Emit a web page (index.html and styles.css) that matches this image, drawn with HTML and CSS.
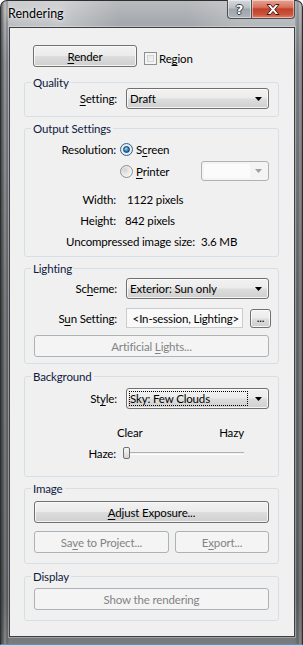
FILE: index.html
```html
<!DOCTYPE html>
<html>
<head>
<meta charset="utf-8">
<link rel="stylesheet" href="styles.css">
</head>
<body>
<div class="window">
  <div class="titlebar">
    <span class="title">Rendering</span>
    <div class="caption-buttons">
      <div class="cap-btn help"><span class="help-glyph">?</span></div>
      <div class="cap-btn close">
        <svg width="14" height="11" viewBox="0 0 14 11"><path d="M1 0.5h3.5l2.5 3 2.5-3h3.5l-4.2 5 4.2 5h-3.5l-2.5-3-2.5 3h-3.5l4.2-5z" fill="#fff" stroke="#4a1a12" stroke-width="1" stroke-linejoin="round"/></svg>
      </div>
    </div>
  </div>
  <div class="client">
    <div class="top-row">
      <div class="btn render-btn"><span><u>R</u>ender</span></div>
      <div class="check-wrap"><span class="checkbox"></span><span>Re<u>g</u>ion</span></div>
    </div>

    <fieldset class="group quality">
      <legend>Quality</legend>
      <div class="row first">
        <span class="lbl"><u>S</u>etting:</span>
        <div class="combo"><span class="combo-text">Draft</span><span class="arrow"><svg width="7" height="4" viewBox="0 0 7 4"><path d="M0 0h7l-3.5 4z" fill="#000"/></svg></span></div>
      </div>
    </fieldset>

    <fieldset class="group output">
      <legend>Output Settings</legend>
      <div class="rrow res">
        <span class="lbl">Resolution:</span>
        <div class="radio-wrap"><span class="radio checked"><span class="dot"></span></span><span>S<u>c</u>reen</span></div>
      </div>
      <div class="rrow printer">
        <span class="lbl"></span>
        <div class="radio-wrap"><span class="radio"></span><span><u>P</u>rinter</span></div>
        <div class="combo disabled small"><span class="field"></span><span class="arrow"><svg width="7" height="4" viewBox="0 0 7 4"><path d="M0 0h7l-3.5 4z" fill="#a0a0a0"/></svg></span></div>
      </div>
      <div class="vrow first-v"><span class="lbl">Width:</span><span class="val w">1122 pixels</span></div>
      <div class="vrow"><span class="lbl">Height:</span><span class="val h">842 pixels</span></div>
      <div class="unc"><span>Uncompressed image size:</span><span class="unc-val">3.6 MB</span></div>
    </fieldset>

    <fieldset class="group lighting">
      <legend>Lighting</legend>
      <div class="row scheme">
        <span class="lbl">Sc<u>h</u>eme:</span>
        <div class="combo"><span class="combo-text">Exterior: Sun only</span><span class="arrow"><svg width="7" height="4" viewBox="0 0 7 4"><path d="M0 0h7l-3.5 4z" fill="#000"/></svg></span></div>
      </div>
      <div class="row sun">
        <span class="lbl">S<u>u</u>n Setting:</span>
        <div class="sun-ctrls">
          <div class="textbox"><span>&lt;In-session, Lighting&gt;</span></div>
          <div class="btn dots"><span>...</span></div>
        </div>
      </div>
      <div class="btn wide disabled art"><span>Artificial <u>L</u>ights...</span></div>
    </fieldset>

    <fieldset class="group background">
      <legend>Background</legend>
      <div class="row style">
        <span class="lbl">St<u>y</u>le:</span>
        <div class="combo focus"><span class="focus-rect">Sky: Few Clouds</span><span class="arrow"><svg width="7" height="4" viewBox="0 0 7 4"><path d="M0 0h7l-3.5 4z" fill="#000"/></svg></span></div>
      </div>
      <div class="scale"><span>Clear</span><span>Hazy</span></div>
      <div class="haze-row">
        <span class="lbl">Haze:</span>
        <div class="slider"><span class="track"></span><span class="thumb"></span></div>
      </div>
    </fieldset>

    <fieldset class="group image">
      <legend>Image</legend>
      <div class="btn wide adjust"><span><u>A</u>djust Exposure...</span></div>
      <div class="btn-row">
        <div class="btn disabled save"><span>Sa<u>v</u>e to Project...</span></div>
        <div class="btn disabled export"><span>E<u>x</u>port...</span></div>
      </div>
    </fieldset>

    <fieldset class="group display">
      <legend>Display</legend>
      <div class="btn wide disabled show"><span>Show the rendering</span></div>
    </fieldset>
  </div>
</div>
</body>
</html>
```
FILE: styles.css
```css
html, body {
  margin: 0;
  padding: 0;
}
body {
  width: 303px;
  height: 645px;
  background: #ffffff;
  font-family: Lato, "Liberation Sans", sans-serif;
  font-size: 11.5px;
  letter-spacing: -0.15px;
  color: #000;
  overflow: hidden;
}
u { text-decoration-thickness: 1px; text-underline-offset: 2px; }

.window {
  box-sizing: border-box;
  height: 645px;
  width: 303px;
  display: flex;
  flex-direction: column;
  padding: 0 7px 7px 8px;
  border-radius: 7px 7px 0 0;
  border: 1px solid #2e2e2e;
  border-bottom-color: #2aa7c9;
  background:
    linear-gradient(90deg, rgba(30,30,30,0.6) 0, rgba(30,30,30,0.1) 3px, rgba(255,255,255,0.15) 4px, rgba(30,30,30,0.25) 6px, rgba(30,30,30,0) 8px, rgba(30,30,30,0) 294px, rgba(30,30,30,0.25) 297px, rgba(255,255,255,0.12) 299px, rgba(30,30,30,0.6) 303px),
    linear-gradient(180deg, #b9bcbf 0, #a7abaf 20px, #8a8e93 60px, #6f7377 300px, #63676b 600px, #7a7d80 645px);
}
.titlebar {
  height: 26px;
  display: flex;
  align-items: flex-start;
  flex-shrink: 0;
  margin-left: -1px;
  background: linear-gradient(90deg, rgba(255,255,255,0.25) 0, rgba(255,255,255,0.35) 50px, rgba(255,255,255,0) 110px, rgba(255,255,255,0) 180px, rgba(255,255,255,0.2) 230px);
}
.title {
  padding-top: 5px;
  line-height: 16px;
  font-size: 12.5px;
  letter-spacing: 0;
  color: #000;
  text-shadow: 0 0 8px rgba(255,255,255,0.9), 0 0 3px rgba(255,255,255,0.8);
}
.caption-buttons {
  margin-left: auto;
  margin-top: -1px;
  display: flex;
}
.cap-btn {
  box-sizing: border-box;
  height: 19px;
  display: flex;
  align-items: center;
  justify-content: center;
  border: 1px solid #4b4f54;
  border-top: none;
  box-shadow: inset 0 0 0 1px rgba(255,255,255,0.45);
}
.help {
  width: 25px;
  border-radius: 0 0 0 4px;
  background: linear-gradient(180deg, #d6dade 0, #b9bec3 45%, #9ea4aa 50%, #aeb4ba 100%);
}
.help-glyph {
  font-family: "DejaVu Sans", sans-serif;
  font-weight: bold;
  font-size: 13px;
  line-height: 13px;
  letter-spacing: 0;
  color: #fff;
  text-shadow: 1px 0 0 #3a3f45, -1px 0 0 #3a3f45, 0 1px 0 #3a3f45, 0 -1px 0 #3a3f45;
}
.close {
  width: 43px;
  border-left: none;
  border-radius: 0 0 4px 0;
  background: linear-gradient(180deg, #e6a393 0, #d7735d 40%, #c2402a 50%, #c9533a 80%, #e0836a 100%);
}

.client {
  flex: 1;
  box-sizing: border-box;
  background: #f0f0f0;
  border: 1px solid #3f3f3f;
  box-shadow: 0 0 0 1px rgba(255,255,255,0.3);
  padding: 17px 15px 0 14px;
  display: flex;
  flex-direction: column;
}

/* buttons */
.btn {
  box-sizing: border-box;
  height: 22px;
  border: 1px solid #707070;
  border-radius: 3px;
  background: linear-gradient(180deg, #f2f2f2 0, #ebebeb 48%, #dddddd 52%, #cfcfcf 100%);
  box-shadow: inset 0 0 0 1px rgba(252,252,252,0.8);
  display: flex;
  align-items: center;
  justify-content: center;
  line-height: 15px;
  white-space: nowrap;
}
.btn.disabled {
  border-color: #adb2b5;
  background: #f4f4f4;
  box-shadow: none;
  color: #838383;
}
.top-row {
  display: flex;
  align-items: flex-start;
  padding-left: 9px;
}
.render-btn { width: 104px; }
.check-wrap {
  display: flex;
  align-items: center;
  margin-left: 7px;
  margin-top: 6px;
  line-height: 15px;
}
.checkbox {
  box-sizing: border-box;
  width: 13px;
  height: 13px;
  border: 1px solid #8e8f8f;
  background: linear-gradient(135deg, #dcdcdc 0, #f0f0f0 60%, #fbfbfb 100%);
  box-shadow: inset 0 0 0 2px #f4f4f4, inset 0 0 0 3px #d4d4d4;
  margin-right: 2px;
}

/* group boxes */
.group {
  margin: 0;
  padding: 0 9px 7px 0;
  border: 1px solid #d5dfe5;
  border-radius: 3px;
  min-width: 0;
}
.group legend {
  margin-left: 6px;
  padding: 0 2px;
  line-height: 13px;
  color: #0f1a40;
}
.quality { margin-top: 9px; }
.output { margin-top: 5px; padding-bottom: 4px; }
.lighting { margin-top: 5px; padding-bottom: 6px; }
.background { margin-top: 6px; padding-bottom: 15px; }
.image { margin-top: 5px; padding-bottom: 10px; }
.display { margin-top: 6px; padding-bottom: 10px; }

.row {
  display: grid;
  grid-template-columns: 92px 1fr;
  column-gap: 9px;
  align-items: center;
}
.lbl { text-align: right; line-height: 15px; white-space: nowrap; }
.quality .row.first { margin-top: -1px; }

/* combo */
.combo {
  box-sizing: border-box;
  height: 21px;
  border: 1px solid #707070;
  border-radius: 3px;
  background: linear-gradient(180deg, #f2f2f2 0, #ebebeb 48%, #dddddd 52%, #cfcfcf 100%);
  box-shadow: inset 0 0 0 1px rgba(252,252,252,0.8);
  display: flex;
  align-items: center;
  line-height: 15px;
}
.combo-text {
  flex: 1;
  padding-left: 3px;
  white-space: nowrap;
}
.arrow {
  width: 16px;
  display: flex;
  justify-content: center;
  align-items: center;
  margin-right: 2px;
}
.combo.focus { padding-left: 2px; }
.focus-rect {
  flex: 1;
  height: 15px;
  outline: 1px dotted #000;
  outline-offset: -1px;
  padding-left: 1px;
  margin-right: 2px;
  line-height: 15px;
  white-space: nowrap;
}
.combo.disabled {
  border-color: #adb2b5;
  background: #f4f4f4;
  box-shadow: none;
  padding-left: 2px;
}
.combo.small { width: 68px; height: 20px; margin-left: auto; }
.field {
  flex: 1;
  height: 14px;
  background: #fbfbfb;
}

/* output rows */
.rrow {
  display: flex;
  align-items: center;
  height: 20px;
}
.rrow .lbl { width: 91px; flex-shrink: 0; }
.res { margin-top: 4px; }
.printer { margin-top: 2px; }
.radio-wrap {
  display: flex;
  align-items: center;
  margin-left: 4px;
  line-height: 15px;
}
.radio {
  box-sizing: border-box;
  width: 13px;
  height: 13px;
  border-radius: 50%;
  border: 1px solid #8e8f8f;
  background: radial-gradient(circle at 35% 35%, #d2d2d2 0, #ececec 50%, #fcfcfc 100%);
  margin-right: 3px;
  display: flex;
  align-items: center;
  justify-content: center;
}
.radio.checked {
  border-color: #2c628b;
  background: radial-gradient(circle at 50% 50%, #f4f8fb 0, #dbe6ee 100%);
}
.dot {
  width: 7px;
  height: 7px;
  border-radius: 50%;
  background: radial-gradient(circle at 40% 35%, #a6dcf5 0, #3c8cc9 45%, #0e4a85 100%);
  border: 0.5px solid #0d3a66;
  box-sizing: border-box;
}
.vrow {
  display: flex;
  align-items: center;
  height: 21px;
}
.vrow .lbl { width: 91px; flex-shrink: 0; }
.vrow .val.w { margin-left: 11px; }
.vrow .val.h { margin-left: 9px; }
.first-v { margin-top: 8px; }
.unc {
  height: 21px;
  display: flex;
  align-items: center;
  padding-left: 41px;
  white-space: nowrap;
}
.unc-val { margin-left: 6px; }

/* lighting */
.scheme { margin-top: 3px; }
.sun { margin-top: 9px; }
.sun-ctrls {
  display: flex;
  align-items: center;
}
.textbox {
  box-sizing: border-box;
  width: 117px;
  height: 20px;
  border: 1px solid #c9cdd0;
  background: #f9f9f9;
  display: flex;
  align-items: center;
  justify-content: flex-end;
  padding-right: 3px;
  white-space: nowrap;
  overflow: hidden;
  line-height: 15px;
}
.dots {
  width: 21px;
  height: 19px;
  margin-left: 7px;
  line-height: 10px;
  align-items: flex-end;
  padding-bottom: 4px;
}
.btn.wide { margin-left: 9px; }
.art { margin-top: 7px; }

/* background */
.style { margin-top: 5px; }
.scale {
  margin-top: 16px;
  margin-left: 92px;
  width: 127px;
  display: flex;
  justify-content: space-between;
  line-height: 15px;
}
.haze-row {
  margin-top: 5px;
  display: flex;
  align-items: center;
  height: 16px;
}
.haze-row .lbl { width: 91px; flex-shrink: 0; }
.slider {
  margin-left: 7px;
  width: 121px;
  height: 16px;
  display: flex;
  align-items: center;
  position: relative;
}
.track {
  flex: 1;
  height: 1px;
  border-top: 1px solid #b0b0b0;
  border-bottom: 1px solid #ffffff;
  margin-left: 3px;
}
.thumb {
  position: absolute;
  left: 0;
  top: 2px;
  box-sizing: border-box;
  width: 7px;
  height: 12px;
  border: 1px solid #707070;
  border-radius: 2px;
  background: linear-gradient(180deg, #f6f6f6 0, #e6e6e6 50%, #d4d4d4 100%);
}

/* image */
.adjust { margin-top: 6px; }
.btn-row {
  display: flex;
  margin-top: 8px;
  margin-left: 9px;
  gap: 6px;
}
.save { width: 135px; }
.export { flex: 1; }
.show { margin-top: 5px; }
```
